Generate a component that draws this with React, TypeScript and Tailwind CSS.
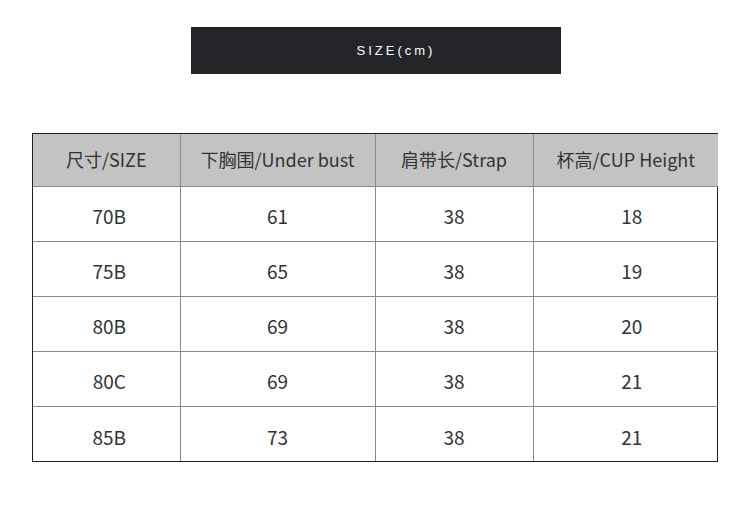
export default function App() {
  const rows = [
    ["70B", "61", "38", "18"],
    ["75B", "65", "38", "19"],
    ["80B", "69", "38", "20"],
    ["80C", "69", "38", "21"],
    ["85B", "73", "38", "21"],
  ];
  const headers = ["尺寸/SIZE", "下胸围/Under bust", "肩带长/Strap", "杯高/CUP Height"];
  const widths = ["w-[147px]", "w-[195px]", "w-[158px]", "w-[185px]"];
  const pads = ["pl-[6px]", "pl-0", "pl-0", "pl-[12px]"];

  return (
    <div className="w-[750px] h-[513px] bg-white relative" style={{ fontFamily: '"Noto Sans CJK SC", "Noto Sans", sans-serif' }}>
      <div className="pt-[27px] flex justify-center">
        <div className="ml-[2px] w-[370px] h-[47px] bg-[#242529] flex items-center justify-center">
          <span className="pl-[40px] text-white text-[13px] tracking-[3px]" style={{ fontFamily: '"Liberation Sans", sans-serif' }}>
            SIZE(cm)
          </span>
        </div>
      </div>

      <div className="mt-[59px] ml-[32px] w-[686px] border border-[#1f1f1f]">
        <table className="w-full border-collapse table-fixed text-[#333]">
          <thead>
            <tr className="bg-[#c3c3c3] h-[52px]">
              {headers.map((h, i) => (
                <th key={h} className={`${widths[i]} font-normal text-[18px] text-center border-l border-[#8a8a8a] first:border-l-0`}>
                  {h}
                </th>
              ))}
            </tr>
          </thead>
          <tbody>
            {rows.map((r, ri) => (
              <tr key={ri} className="h-[55px]">
                {r.map((c, ci) => (
                  <td key={ci} className={`${pads[ci]} text-[19px] text-center border-t border-l border-[#8a8a8a] first:border-l-0 pt-[6px]`}>
                    {c}
                  </td>
                ))}
              </tr>
            ))}
          </tbody>
        </table>
      </div>
    </div>
  );
}
